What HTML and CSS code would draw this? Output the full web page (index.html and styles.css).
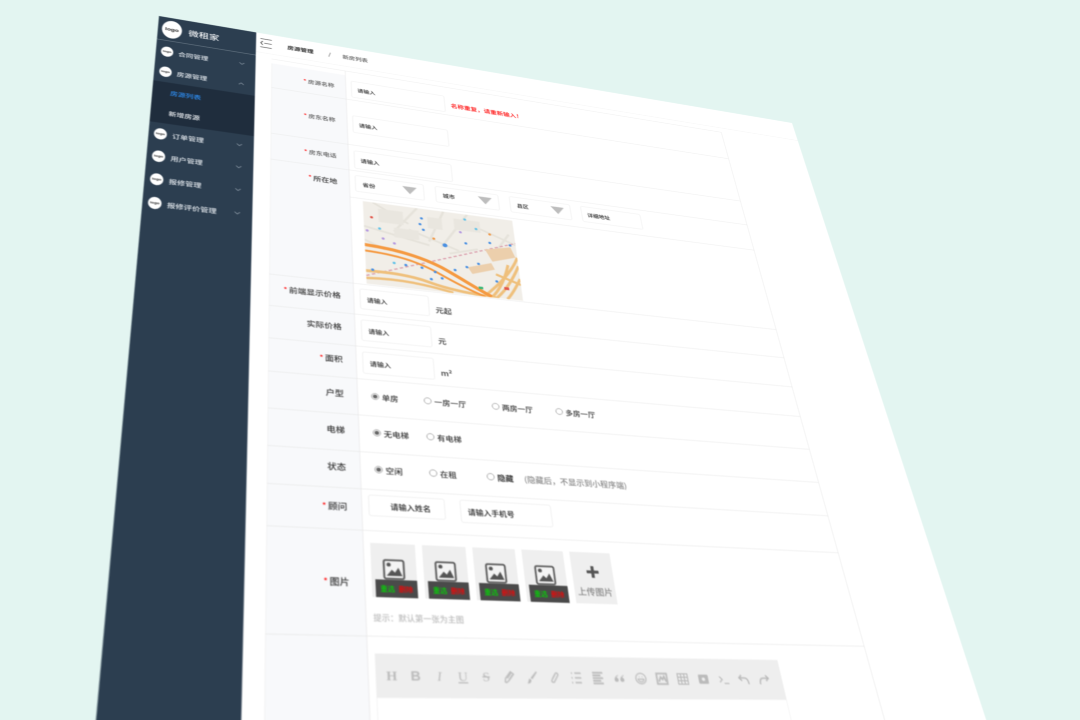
FILE: index.html
```html
<!DOCTYPE html>
<html lang="zh">
<head>
<meta charset="utf-8">
<title>新房列表</title>
<link rel="stylesheet" href="styles.css">
</head>
<body>
<div class="stage">
<div class="page">
  <aside class="sidebar">
    <div class="brand"><span class="logo logo-big">logo</span><span class="brand-name">微租家</span></div>
    <div class="menu-item"><span class="logo">logo</span><span>合同管理</span><svg class="chev" viewBox="0 0 12 8"><path d="M1 1l5 5 5-5"/></svg></div>
    <div class="menu-item"><span class="logo">logo</span><span>房源管理</span><svg class="chev" viewBox="0 0 12 8"><path d="M1 7l5-5 5 5"/></svg></div>
    <div class="submenu">
      <div class="sub-item sub-active">房源列表</div>
      <div class="sub-item">新增房源</div>
    </div>
    <div class="menu-item"><span class="logo">logo</span><span>订单管理</span><svg class="chev" viewBox="0 0 12 8"><path d="M1 1l5 5 5-5"/></svg></div>
    <div class="menu-item"><span class="logo">logo</span><span>用户管理</span><svg class="chev" viewBox="0 0 12 8"><path d="M1 1l5 5 5-5"/></svg></div>
    <div class="menu-item"><span class="logo">logo</span><span>报修管理</span><svg class="chev" viewBox="0 0 12 8"><path d="M1 1l5 5 5-5"/></svg></div>
    <div class="menu-item"><span class="logo">logo</span><span>报修评价管理</span><svg class="chev" viewBox="0 0 12 8"><path d="M1 1l5 5 5-5"/></svg></div>
  </aside>
  <main class="main">
    <div class="topbar">
      <svg class="burger" viewBox="0 0 26 30"><path d="M1 2h24M9 15h16M1 28h24M6 9l-4 6 4 6"/></svg>
      <span class="crumb-strong">房源管理</span><span class="crumb-sep">/</span><span class="crumb">新房列表</span>
    </div>
    <div class="form">
      <div class="row r1">
        <div class="label label-first small"><i>*</i> 房源名称</div>
        <div class="cell pad28"><input class="input" placeholder="请输入"><span class="error">名称重复，请重新输入！</span></div>
      </div>
      <div class="row r2">
        <div class="label small"><i>*</i> 房东名称</div>
        <div class="cell pad46"><input class="input" placeholder="请输入"></div>
      </div>
      <div class="row r3">
        <div class="label small"><i>*</i> 房东电话</div>
        <div class="cell pad15"><input class="input" placeholder="请输入"></div>
      </div>
      <div class="row raddr">
        <div class="label label-top"><i>*</i> 所在地</div>
        <div class="cell cell-col">
          <div class="selects">
            <div class="select s1">省份<b class="tri"></b></div>
            <div class="select s2">城市<b class="tri"></b></div>
            <div class="select s2">县区<b class="tri"></b></div>
            <input class="input addr" placeholder="详细地址">
          </div>
          <div class="map-wrap">
            <svg class="map" viewBox="0 0 312 210">
              <rect width="312" height="210" fill="#f1eee8"/>
              <path d="M20 0l70 45M110 0L60 70M0 65l130 30M165 0l-35 85M215 0l-60 95M240 35l72 32M300 40l-45 70M0 100l40 20M90 60l100 40M170 110l60-20" stroke="#e6e3db" stroke-width="5" fill="none"/>
              <path d="M30 15h50v35h-50zM185 15h55v30h-55zM60 60h50v25h-50zM130 20h30v30h-30z" fill="#e9e6df"/>
              <path d="M0 190L312 62" stroke="#dba0ae" stroke-width="3" stroke-dasharray="7 5" fill="none"/>
              <path d="M245 88l55-14 8 26-50 18zM205 140l50-18 6 16-48 18z" fill="#eccfac"/>
              <path d="M0 178C50 176 90 178 125 190C165 203 205 206 262 210" stroke="#efc07c" stroke-width="7" fill="none"/>
              <path d="M0 196C50 190 110 194 170 209" stroke="#efc07c" stroke-width="6" fill="none"/>
              <path d="M312 100C298 135 272 170 232 210M312 122C300 150 282 185 258 210M290 122C280 160 265 190 248 210M312 155C300 180 290 198 280 210M262 150l50 20" stroke="#efc07c" stroke-width="6" fill="none"/>
              <path d="M0 113C70 116 115 130 150 148C185 168 215 190 248 208" stroke="#f59a42" stroke-width="8" fill="none"/>
              <path d="M0 128C65 130 105 142 140 162C170 180 200 197 235 210" stroke="#f59a42" stroke-width="5" fill="none"/>
              <g fill="#4a90e2">
                <circle cx="118" cy="26" r="3"/><circle cx="114" cy="42" r="3"/><circle cx="120" cy="56" r="3"/><circle cx="206" cy="78" r="3"/><circle cx="162" cy="90" r="5"/><circle cx="257" cy="69" r="3"/><circle cx="300" cy="69" r="3"/><circle cx="13" cy="174" r="3"/><circle cx="79" cy="153" r="3"/><circle cx="111" cy="155" r="3"/><circle cx="137" cy="162" r="3"/><circle cx="178" cy="151" r="3"/><circle cx="203" cy="140" r="3"/><circle cx="228" cy="128" r="3"/><circle cx="128" cy="181" r="3"/><circle cx="150" cy="176" r="3"/><circle cx="262" cy="168" r="3"/>
              </g>
              <g fill="#62c3e8"><circle cx="209" cy="14" r="3"/><circle cx="231" cy="36" r="3"/><circle cx="56" cy="151" r="3"/><circle cx="31" cy="67" r="3"/></g>
              <g fill="#b59ae0"><circle cx="6" cy="76" r="3"/><circle cx="37" cy="92" r="3"/><circle cx="59" cy="101" r="3"/><circle cx="197" cy="50" r="3"/></g>
              <circle cx="140" cy="76" r="3" fill="#f09a4a"/><circle cx="259" cy="46" r="3" fill="#f09a4a"/><circle cx="16" cy="40" r="3" fill="#e2574c"/><rect x="276" y="180" width="10" height="7" fill="#e2574c"/><rect x="223" y="186" width="9" height="6" fill="#3cb878"/>
            </svg>
          </div>
        </div>
      </div>
      <div class="row r73">
        <div class="label lift"><i>*</i> 前端显示价格</div>
        <div class="cell pad11 line"><input class="input short" placeholder="请输入"><span class="unit">元起</span></div>
      </div>
      <div class="row r73">
        <div class="label lift">实际价格</div>
        <div class="cell pad11 line"><input class="input short" placeholder="请输入"><span class="unit">元</span></div>
      </div>
      <div class="row r72">
        <div class="label lift"><i>*</i>面积</div>
        <div class="cell pad11 line"><input class="input short" placeholder="请输入"><span class="unit">m²</span></div>
      </div>
      <div class="row r77">
        <div class="label lift">户型</div>
        <div class="cell radios">
          <label class="opt o96"><span class="radio on"></span>单房</label>
          <label class="opt o128"><span class="radio"></span>一房一厅</label>
          <label class="opt o124"><span class="radio"></span>两房一厅</label>
          <label class="opt"><span class="radio"></span>多房一厅</label>
        </div>
      </div>
      <div class="row r75">
        <div class="label lift">电梯</div>
        <div class="cell radios">
          <label class="opt o96"><span class="radio on"></span>无电梯</label>
          <label class="opt"><span class="radio"></span>有电梯</label>
        </div>
      </div>
      <div class="row r73">
        <div class="label lift">状态</div>
        <div class="cell radios">
          <label class="opt o96"><span class="radio on"></span>空闲</label>
          <label class="opt o104"><span class="radio"></span>在租</label>
          <label class="opt"><span class="radio"></span><strong class="dim">隐藏</strong></label>
          <span class="note">(隐藏后，不显示到小程序端)</span>
        </div>
      </div>
      <div class="row r78">
        <div class="label lift"><i>*</i> 顾问</div>
        <div class="cell adviser">
          <input class="input name" placeholder="请输入姓名">
          <input class="input phone" placeholder="请输入手机号">
        </div>
      </div>
      <div class="row r185">
        <div class="label"><i>*</i> 图片</div>
        <div class="cell cell-col pad22">
          <div class="tiles">
            <div class="tile"><svg class="pic" viewBox="0 0 37 37"><rect x="2" y="2" width="33" height="33" rx="3"/><circle cx="10" cy="10" r="3.5"/><path d="M6 30l9-11 5 5 6-9 6 15z"/></svg><div class="tile-bar"><span class="g">重选</span><span class="r">删除</span></div></div>
            <div class="tile"><svg class="pic" viewBox="0 0 37 37"><rect x="2" y="2" width="33" height="33" rx="3"/><circle cx="10" cy="10" r="3.5"/><path d="M6 30l9-11 5 5 6-9 6 15z"/></svg><div class="tile-bar"><span class="g">重选</span><span class="r">删除</span></div></div>
            <div class="tile"><svg class="pic" viewBox="0 0 37 37"><rect x="2" y="2" width="33" height="33" rx="3"/><circle cx="10" cy="10" r="3.5"/><path d="M6 30l9-11 5 5 6-9 6 15z"/></svg><div class="tile-bar"><span class="g">重选</span><span class="r">删除</span></div></div>
            <div class="tile"><svg class="pic" viewBox="0 0 37 37"><rect x="2" y="2" width="33" height="33" rx="3"/><circle cx="10" cy="10" r="3.5"/><path d="M6 30l9-11 5 5 6-9 6 15z"/></svg><div class="tile-bar"><span class="g">重选</span><span class="r">删除</span></div></div>
            <div class="tile tile-up"><svg class="plus" viewBox="0 0 24 24"><path d="M9 0h6v9h9v6h-9v9h-6v-9H0V9h9z"/></svg><span>上传图片</span></div>
          </div>
          <div class="hint">提示：默认第一张为主图</div>
        </div>
      </div>
      <div class="row rlast">
        <div class="label"></div>
        <div class="cell pad29">
          <div class="editor">
            <div class="toolbar">
              <span class="tb">H</span><span class="tb tb-b">B</span><span class="tb tb-i">I</span><span class="tb tb-u">U</span><span class="tb tb-s">S</span>
              <span class="tb"><svg viewBox="0 0 24 24"><path d="M7 21l-2-1 1-6L15 3l5 4-9 11zM9 14l7-9M12 16l6-8"/></svg></span>
              <span class="tb"><svg class="fill" viewBox="0 0 24 24"><path d="M20 2l2 1-9 12-3-2zM8 14l3 2c0 4-3 7-7 6 2-1 2-6 4-8z"/></svg></span>
              <span class="tb"><svg viewBox="0 0 24 24"><path d="M9 14l6-9c2-2 5 0 4 3l-7 11c-2 2-6 0-4-3l6-9"/></svg></span>
              <span class="tb"><svg viewBox="0 0 24 24"><path d="M4 4h2M10 4h11M4 12h2M10 12h11M4 20h2M10 20h11" stroke-width="2.5"/></svg></span>
              <span class="tb"><svg viewBox="0 0 24 24"><path d="M3 3h18M3 7.500h14M3 12h18M3 16.500h14M3 21h18" stroke-width="3"/></svg></span>
              <span class="tb"><svg class="fill" viewBox="0 0 24 24"><path d="M10 6C6 8 3 11 3 15a3.500 3.500 0 107-1c0-2-2-3-3-3 0-1 2-3 3-4zM20 6c-4 2-7 5-7 9a3.500 3.500 0 107-1c0-2-2-3-3-3 0-1 2-3 3-4z"/></svg></span>
              <span class="tb"><svg viewBox="0 0 24 24"><circle cx="12" cy="12" r="9"/><path d="M7 13h10c0 6-10 6-10 0zM9 9h1M14 9h1"/></svg></span>
              <span class="tb"><svg viewBox="0 0 24 24"><rect x="3" y="3" width="18" height="18" stroke-width="3"/><path d="M6 17l4-8 3 4 3-5 3 9" stroke-width="3"/></svg></span>
              <span class="tb"><svg viewBox="0 0 24 24"><rect x="3" y="3" width="18" height="18"/><path d="M3 9h18M3 15h18M9 3v18M15 3v18"/></svg></span>
              <span class="tb"><svg class="fill" viewBox="0 0 24 24"><path fill-rule="evenodd" d="M5 4h14a2 2 0 012 2v12a2 2 0 01-2 2H5a2 2 0 01-2-2V6a2 2 0 012-2zm7 5a3 3 0 100 6 3 3 0 000-6z"/></svg></span>
              <span class="tb"><svg viewBox="0 0 24 24"><path d="M4 7l5 5-5 5M12 19h9"/></svg></span>
              <span class="tb"><svg viewBox="0 0 24 24"><path d="M8 4L3 9l5 5M3 9h10c5 0 7 4 7 11" stroke-width="2.500"/></svg></span>
              <span class="tb"><svg viewBox="0 0 24 24"><path d="M16 4l5 5-5 5M21 9H11c-5 0-7 4-7 11" stroke-width="2.500"/></svg></span>
            </div>
            <div class="editor-body"></div>
          </div>
        </div>
      </div>
    </div>
  </main>
</div>
</div>
</body>
</html>
```
FILE: styles.css
```css
* { box-sizing: border-box; }
html, body { margin: 0; padding: 0; height: 720px; overflow: hidden; }
body { font-family: "Noto Sans CJK SC", "Liberation Sans", sans-serif; font-weight: 500; color: #333; background: #e3f5f1; }
.stage { width: 1080px; height: 720px; overflow: hidden; background: #e3f5f1; }
.page {
  width: 1500px; height: 1560px; display: flex; background: #fff;
  transform-origin: 0 0;
  transform: matrix3d(0.517087,0.0861,0,0.00012006, -0.062993,0.311887,0,-0.00021868, 0,0,1,0, 159,16,0,1);
  filter: blur(0.85px);
}
.sidebar { width: 200px; flex: none; background: #2c3e50; color: #e6ebf0; font-size: 15px; }
.brand { height: 72px; margin-bottom: 3px; display: flex; align-items: center; gap: 13px; padding-left: 8px; border-bottom: 1px solid #9aa6b2; }
.brand-name { font-size: 21px; color: #f2f4f6; }
.logo { width: 24px; height: 30px; border-radius: 50%; background: #fff; color: #222; font: 700 8px/30px "Liberation Sans", sans-serif; text-align: center; flex: none; }
.logo-big { width: 40px; height: 54px; font-size: 13px; line-height: 54px; }
.menu-item { height: 60px; display: flex; align-items: center; gap: 10px; padding-left: 10px; }
.chev { width: 12px; height: 8px; margin-left: auto; margin-right: 22px; fill: none; stroke: #93a0ad; stroke-width: 1.5; }
.submenu { background: #1f2d3d; height: 116px; }
.sub-item { height: 58px; line-height: 58px; padding-left: 34px; color: #eef1f4; }
.sub-active { color: #2d8cf0; }
.main { flex: 1; min-width: 0; }
.topbar { height: 61px; display: flex; align-items: center; padding-left: 8px; border-bottom: 1px solid #eee; font-size: 14px; }
.burger { width: 26px; height: 30px; margin-right: 32px; fill: none; stroke: #222; stroke-width: 1.6; }
.crumb-strong { font-weight: 700; color: #222; }
.crumb-sep { margin: 0 25px 0 32px; color: #555; }
.crumb { color: #555; }
.form { margin: 14px 0 0 33px; width: 1057px; border-top: 1px solid #e4e4e4; border-right: 1px solid #e4e4e4; }
.row { display: flex; border-bottom: 1px solid #e4e4e4; }
.label { width: 156px; flex: none; background: #f8f9fb; padding-right: 24px; display: flex; align-items: center; justify-content: flex-end; gap: 3px; font-size: 16px; color: #333; border-left: 1px solid #eee; }
.label i { color: #f00; font-style: normal; font-size: 14px; }
.small { font-size: 14px; color: #555; }
.lift { padding-bottom: 10px; }
.label-first { margin-top: 13px; }
.label-top { align-items: flex-start; padding-top: 23px; }
.cell { flex: 1; min-width: 0; border-left: 1px solid #e4e4e4; padding-left: 11px; display: flex; }
.cell-col { flex-direction: column; }
.r1 { height: 87px; }
.r2 { height: 133px; }
.r3 { height: 72px; }
.raddr { height: 293px; }
.r73 { height: 73px; }
.r72 { height: 72px; }
.r77 { height: 77px; }
.r75 { height: 75px; }
.r78 { height: 78px; }
.r185 { height: 185px; }
.rlast { height: 210px; border-bottom: 0; }
.pad28 { padding-top: 28px; }
.pad46 { padding-top: 46px; }
.pad15 { padding-top: 15px; }
.pad11 { padding-top: 11px; }
.pad22 { padding-top: 22px; }
.pad29 { padding-top: 28px; }
.input { width: 206px; height: 50px; border: 1px solid #e8e8e8; border-radius: 4px; padding: 0 12px; font: 500 13px "Noto Sans CJK SC", sans-serif; color: #222; outline: 0; background: #fff; }
.input::placeholder { color: #222; opacity: 1; }
.short { width: 133px; height: 48px; }
.error { color: #f00; font-size: 15px; margin: 17px 0 0 13px; line-height: 20px; }
.line .unit { font-size: 16px; color: #333; margin: 20px 0 0 12px; line-height: 22px; }
.selects { height: 74px; margin-left: -11px; padding: 12px 0 0 11px; display: flex; border-bottom: 1px solid #e4e4e4; }
.select { height: 44px; border: 1px solid #e8e8e8; border-radius: 4px; padding: 0 14px; display: flex; align-items: center; justify-content: space-between; font-size: 13px; color: #222; margin-right: 24px; }
.s1 { width: 142px; }
.s2 { width: 136px; }
.tri { width: 0; height: 0; border-left: 15px solid transparent; border-right: 15px solid transparent; border-top: 20px solid #bdbdbd; }
.addr { width: 139px; height: 44px; }
.map-wrap { padding: 6px 0 0 14px; }
.map { width: 312px; height: 210px; display: block; }
.radios { align-items: center; padding: 0 0 6px 24px; font-size: 15px; color: #333; }
.opt { display: flex; align-items: center; gap: 5px; }
.o96 { width: 96px; }
.o128 { width: 128px; }
.o124 { width: 124px; }
.o104 { width: 104px; }
.radio { width: 14px; height: 14px; border: 1px solid #777; border-radius: 50%; display: flex; align-items: center; justify-content: center; background: #fff; flex: none; }
.radio.on::after { content: ""; width: 8px; height: 8px; border-radius: 50%; background: #666; }
.dim { font-weight: 700; color: #333; }
.note { color: #888; margin-left: 20px; font-size: 15.5px; }
.adviser { padding-top: 10px; gap: 27px; }
.name { width: 132px; height: 40px; text-align: center; font-size: 14px; padding: 0 6px 0 18px; }
.phone { width: 166px; height: 44px; font-size: 14px; }
.tiles { display: flex; gap: 12px; }
.tile { width: 75px; height: 96px; background: #efefef; display: flex; flex-direction: column; align-items: center; padding-top: 28px; }
.pic { width: 37px; height: 37px; flex: none; }
.pic rect { fill: #f4f4f4; stroke: #555; stroke-width: 3; }
.pic circle, .pic path { fill: #555; }
.tile-bar { width: 69px; height: 31px; margin-left: 6px; background: #4a4a4a; display: flex; align-items: center; justify-content: center; gap: 6px; font-size: 12px; }
.g { color: #0d0; }
.r { color: #f00; }
.tile-up { color: #888; font-size: 16px; padding-top: 26px; gap: 13px; }
.plus { width: 22px; height: 22px; fill: #555; }
.hint { margin-top: 24px; font-size: 13.5px; line-height: 20px; color: #bbb; }
.editor { width: 706px; height: 181px; border: 1px solid #eee; border-bottom: 0; }
.toolbar { height: 70px; background: #eee; display: flex; align-items: center; padding-left: 5px; }
.tb { width: 38px; height: 24px; display: flex; align-items: center; justify-content: center; color: #bbb; font: 700 22px/24px "Liberation Serif", serif; }
.tb svg { width: 24px; height: 24px; fill: none; stroke: #bbb; stroke-width: 2; }
.tb svg.fill { fill: #bbb; stroke: none; }
.tb-b { font-family: "Liberation Sans", sans-serif; }
.tb-i { font-style: italic; font-weight: 400; }
.tb-u { text-decoration: underline; font-weight: 400; }
.tb-s { text-decoration: line-through; font-weight: 400; }
.editor-body { height: 111px; background: #fff; }
```
